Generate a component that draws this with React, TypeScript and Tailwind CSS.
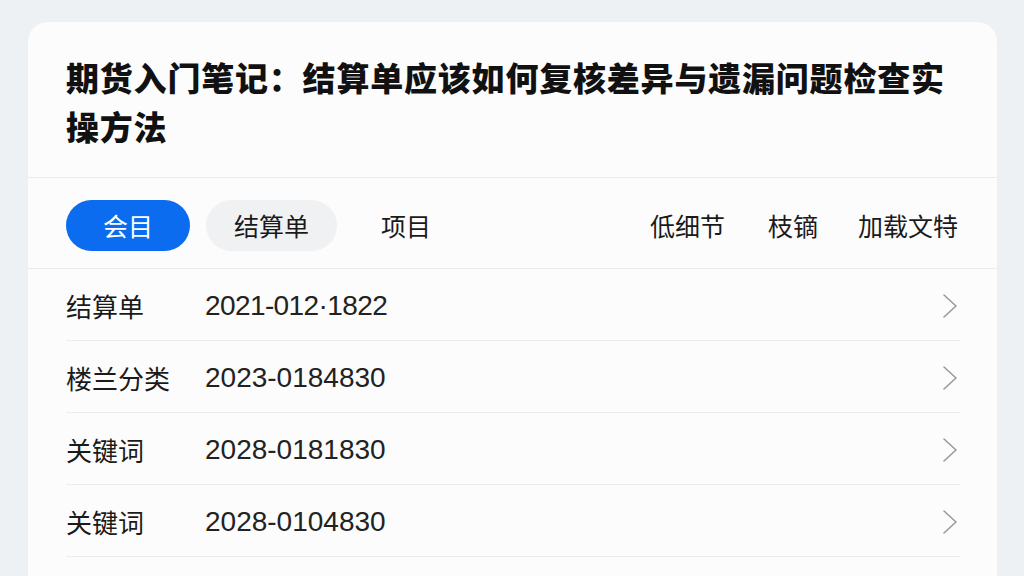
import React from "react";

const rows = [
  { label: "结算单", value: "2021-012·1822", tight: true },
  { label: "楼兰分类", value: "2023-0184830", tight: false },
  { label: "关键词", value: "2028-0181830", tight: false },
  { label: "关键词", value: "2028-0104830", tight: false },
];

function Chevron() {
  return (
    <svg width="16" height="26" viewBox="0 0 16 26" fill="none">
      <path d="M2 2 L14 13 L2 24" stroke="#9a9a9a" strokeWidth="1.6" strokeLinecap="round" strokeLinejoin="round" />
    </svg>
  );
}

export default function App() {
  const font = { fontFamily: '"Noto Sans CJK SC", "Noto Sans", sans-serif' };
  return (
    <div className="w-[1024px] h-[576px] overflow-hidden bg-[#eef1f4] pt-[22px] pl-[28px]" style={font}>
      <div className="w-[969px] h-[600px] rounded-[20px] bg-[#fcfcfc]">
        <div className="pl-[38px] pt-[31px] pb-[26px] border-b border-[#ececec]">
          <h1 className="w-[900px] text-[33px] leading-[49px] tracking-[0.8px] font-black text-[#111]">
            期货入门笔记：结算单应该如何复核差异与遗漏问题检查实操方法
          </h1>
        </div>
        <div className="h-[91px] flex items-start pt-[22px] pl-[38px] pr-[39px] border-b border-[#ececec]">
          <div className="flex items-center gap-4">
            <div className="w-[124px] h-[51px] rounded-full bg-[#0b6cf0] text-white text-[25px] flex items-center justify-center">会目</div>
            <div className="w-[131px] h-[51px] rounded-full bg-[#f0f1f3] text-[#1a1a1a] text-[25px] flex items-center justify-center">结算单</div>
            <div className="h-[51px] px-[28px] text-[#1a1a1a] text-[25px] flex items-center">项目</div>
          </div>
          <div className="ml-auto h-[51px] flex items-center text-[25px] text-[#1a1a1a]">
            <span>低细节</span>
            <span className="ml-[43px]">枝镝</span>
            <span className="ml-[40px]">加载文特</span>
          </div>
        </div>
        <div className="pl-[38px] pr-[37px]">
          {rows.map((r, i) => (
            <div key={i} className="h-[72px] pt-[2px] flex items-center border-b border-[#ececec]">
              <span className="w-[139px] text-[26px] text-[#1a1a1a]">{r.label}</span>
              <span
                className={r.tight ? "text-[28px] tracking-[-0.6px] text-[#222]" : "text-[28px] text-[#222]"}
                style={{ fontFamily: '"Liberation Sans", Arial, sans-serif' }}
              >
                {r.value}
              </span>
              <span className="ml-auto mr-[2px]"><Chevron /></span>
            </div>
          ))}
        </div>
      </div>
    </div>
  );
}
